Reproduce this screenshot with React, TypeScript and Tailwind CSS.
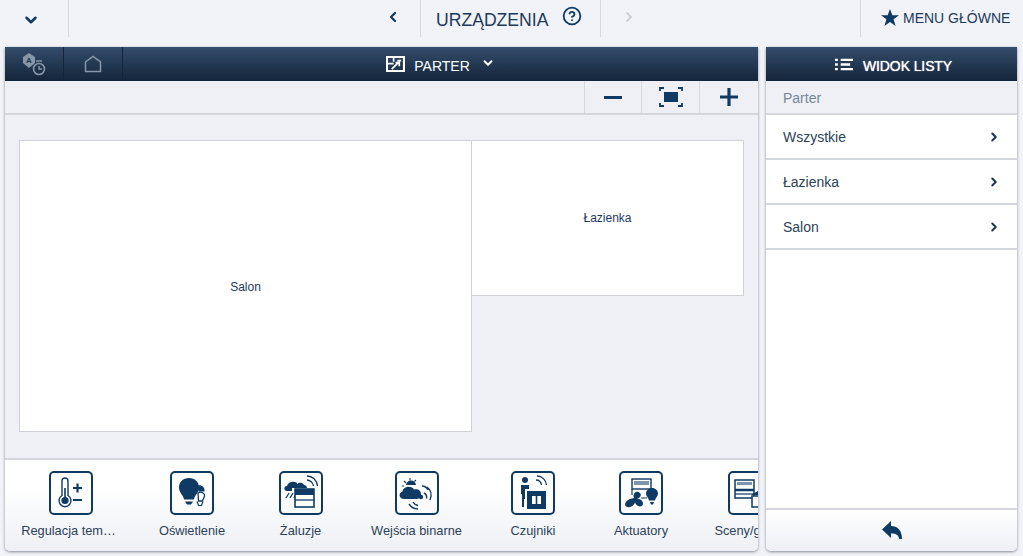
import { ChevronDown, ChevronLeft, ChevronRight, CircleHelp } from 'lucide-react'
import type { ReactNode } from 'react'

const navy = '#0f3a64'

function Thermometer() {
  return (
    <>
      <path d="M13 10a3 3 0 0 1 6 0v14.500a6 6 0 1 1-6 0z" fill="none" stroke={navy} strokeWidth="1.4" />
      <circle cx="16" cy="29.500" r="3.600" fill={navy} />
      <rect x="15.200" y="17" width="1.600" height="10" fill={navy} />
      <path d="M24 17h9M28.500 12.500v9M24 29h9" stroke={navy} strokeWidth="2.200" fill="none" />
    </>
  )
}

function Bulbs() {
  return (
    <>
      <path d="M28 22c2-1.500 6-1 6.500 2 .4 2.500-1.500 3-2 6h-4z" fill="none" stroke={navy} strokeWidth="1.300" />
      <path d="M28 14.500c3.500-1 7 1.500 6.500 6h-6z" fill={navy} />
      <path d="M19 7c6 0 10 4 10 9.500 0 5.500-4.500 7.500-5 12h-10C13.500 24 9 22 9 16.500 9 11 13 7 19 7z" fill={navy} />
      <path d="M15 30.500h8l-2 3h-4z" fill={navy} />
      <path d="M27 30.500l1.500 4h3l1.500-4" fill="none" stroke={navy} strokeWidth="1.200" />
    </>
  )
}

function Blinds() {
  return (
    <>
      <path d="M8 20c-3.500 0-3.500-5 0-5C9 10 17 9.500 18.500 13c1-1.500 5-2 6.500 1 2 0 3 1.500 3 3H13v3z" fill={navy} />
      <path d="M10 22l-3 5M14 22l-3 5M18 22l-3 5" stroke={navy} strokeWidth="1.300" />
      <rect x="16" y="18" width="19" height="18" fill="#fff" stroke={navy} strokeWidth="1.600" />
      <rect x="16" y="18" width="19" height="6" fill={navy} />
      <path d="M16 29h19" stroke={navy} strokeWidth="1.300" />
      <path d="M28 9c3 0 6 2.500 6.500 6M28 5c5.500 0 10 4 10.500 10" fill="none" stroke={navy} strokeWidth="1.300" />
    </>
  )
}

function BinaryInputs() {
  return (
    <>
      <path d="M11 15a5 5 0 0 1 10-1H11z" fill={navy} />
      <path d="M9 10l2 2M15 7v2.500M21 9l-1.500 1.500M7 15h2" stroke={navy} strokeWidth="1.100" />
      <path d="M9 28c-5 0-6-6-1.500-7.500C8 15 17 14 19 18.500c4-1 7 1 7 4.500 0 3-2 5-5 5z" fill={navy} />
      <circle cx="26" cy="26" r="2.200" fill={navy} />
      <path d="M29 22c2 1 3 3 2.500 5.500M32 16c4 3 5 8 3 13M27 15c3 0 5 2 6 4" fill="none" stroke={navy} strokeWidth="1.400" />
      <path d="M18 31c1 2 3 3 5 3.500M14 33c2 3 5 5 9 5" fill="none" stroke={navy} strokeWidth="1.400" />
    </>
  )
}

function Sensors() {
  return (
    <>
      <circle cx="14" cy="9" r="3" fill={navy} />
      <path d="M10 14h8v4h-4v10h-1v8h-2v-13h-1z" fill={navy} />
      <rect x="16" y="20" width="19" height="18" fill={navy} />
      <rect x="21" y="25" width="9" height="8" fill="#fff" />
      <path d="M25.500 25v8" stroke={navy} strokeWidth="1.600" />
      <path d="M25 9c3 0 5 2 5.500 5M26 5c5 0 9 4 9.500 9" fill="none" stroke={navy} strokeWidth="1.300" />
    </>
  )
}

function Actuators() {
  return (
    <>
      <rect x="13" y="8" width="19" height="10" fill="#fff" stroke={navy} strokeWidth="1.400" />
      <rect x="15" y="10" width="15" height="4" fill="#7f95ad" />
      <path d="M13 18v6M22 27h6" stroke={navy} strokeWidth="1.200" />
      <path d="M15 27c-2-5 3-8 6-5 2 2 0 5-3 6 3-.5 6 1.500 6 4.500 0 4-6 4-8-1-1 3-5 6-9 4-3-3 2-8 8-8.500z" fill={navy} />
      <path d="M33 17c3.500 0 6 2.500 6 5.500 0 3-2.500 4-3 7h-6c-.5-3-3-4-3-7 0-3 2.500-5.500 6-5.500z" fill={navy} />
      <path d="M31 31h4l-1 2.500h-2z" fill={navy} />
    </>
  )
}

function Scenes() {
  return (
    <>
      <rect x="7" y="9" width="19" height="18" fill="#fff" stroke={navy} strokeWidth="1.500" />
      <rect x="9" y="11" width="15" height="3" fill="#7f95ad" />
      <path d="M7 19h19" stroke={navy} strokeWidth="2.500" />
      <path d="M7 23h19" stroke={navy} strokeWidth="1.200" />
      <rect x="24" y="25" width="14" height="11" fill="#fff" stroke={navy} strokeWidth="1.500" />
      <path d="M23 24l7-4 7 4z" fill={navy} />
    </>
  )
}

const devices: { label: string; width: string; labelClass?: string; icon: ReactNode }[] = [
  { label: 'Regulacja tem…', width: 'w-[131px]', labelClass: 'mr-[4px]', icon: <Thermometer /> },
  { label: 'Oświetlenie', width: 'w-[112px]', icon: <Bulbs /> },
  { label: 'Żaluzje', width: 'w-[105px]', icon: <Blinds /> },
  { label: 'Wejścia binarne', width: 'w-[127px]', icon: <BinaryInputs /> },
  { label: 'Czujniki', width: 'w-[106px]', icon: <Sensors /> },
  { label: 'Aktuatory', width: 'w-[110px]', icon: <Actuators /> },
  { label: 'Sceny/grupy', width: 'w-[108px]', icon: <Scenes /> },
]

function DeviceButton({
  label,
  width,
  labelClass,
  icon,
}: {
  label: string
  width: string
  labelClass?: string
  icon: ReactNode
}) {
  return (
    <div className={`${width} shrink-0 flex flex-col items-center pt-[11px]`}>
      <div className="relative size-[44px] rounded-[5px] border-2 border-[#0f3a64] bg-white/40">
        <svg viewBox="0 0 44 44" className="absolute -left-[2px] -top-[2px] size-[44px]">
          {icon}
        </svg>
      </div>
      <span className={`mt-[8px] text-[12.8px] leading-[16px] text-[#2c4259] whitespace-nowrap ${labelClass ?? ''}`}>
        {label}
      </span>
    </div>
  )
}

function ListRow({ label }: { label: string }) {
  return (
    <div className="h-[45px] shrink-0 border-b-2 border-[#d3d6dc] pl-[17px] pr-[16px] flex items-center justify-between">
      <span className="pt-[1px] text-[14px] text-[#2c4259]">{label}</span>
      <ChevronRight size={14} strokeWidth={3.4} className="text-[#1c3557]" />
    </div>
  )
}

export default function App() {
  return (
    <div className="h-[556px] w-full overflow-hidden bg-[#f1f3f8] font-['Liberation_Sans',Arial,sans-serif]">
      <header className="h-[47px] flex items-start text-[#1c3a5c]">
        <div className="h-[37px] w-[69px] border-r border-[#d5d8de] flex items-center justify-center">
          <ChevronDown size={18} strokeWidth={3.4} className="text-[#0f3a64] mt-[3px] -ml-[6px]" />
        </div>
        <div className="h-[37px] w-[352px] border-r border-[#d5d8de] flex items-center justify-end pr-[19px]">
          <ChevronLeft size={16} strokeWidth={3.4} className="text-[#0f3a64] -mt-[3px]" />
        </div>
        <div className="h-[37px] w-[180px] border-r border-[#d5d8de] flex items-center pl-[15px]">
          <span className="text-[17.6px] leading-none mt-[5px]">URZĄDZENIA</span>
          <CircleHelp size={20} strokeWidth={2.2} className="ml-[14px] -mt-[5px] text-[#0f3a64]" />
        </div>
        <div className="h-[37px] w-[260px] border-r border-[#d5d8de] flex items-center pl-[20px]">
          <ChevronRight size={16} strokeWidth={3} className="text-[#cdd1d8] -mt-[3px]" />
        </div>
        <div className="h-[37px] flex-1 flex items-center pl-[20px]">
          <svg viewBox="0 0 18 17" className="w-[18px] h-[17px] -mt-[3px]">
            <path d="M9 0l2.300 6.300H18l-5.400 4 2 6.700L9 13l-5.600 4 2-6.700L0 6.300h6.700z" fill="#0f3a64" />
          </svg>
          <span className="ml-[4px] text-[14px] -mt-[1px] whitespace-nowrap">MENU GŁÓWNE</span>
        </div>
      </header>

      <main className="flex pl-[5px] gap-[8px]">
        <section className="w-[753px] h-[504px] flex flex-col rounded-b-[5px] overflow-hidden bg-[#eef0f6] shadow-[0_1px_3px_rgba(60,70,85,0.6)]">
          <div className="h-[34px] shrink-0 flex items-center bg-gradient-to-b from-[#334d6c] to-[#15253b] text-white">
            <div className="h-full w-[59px] border-r border-[#152438] flex items-center justify-center">
              <svg viewBox="0 0 24 24" className="size-[24px]" fill="none">
                <path d="M1 5l6-4 6 4v6l-6 5-6-5z" fill="#8796a8" />
                <text x="7" y="11" textAnchor="middle" fontSize="8" fontWeight="700" fill="#22364f">
                  A
                </text>
                <circle cx="17" cy="17" r="5.500" stroke="#8796a8" strokeWidth="1.600" />
                <path d="M17 14v3h3M14 9h6" stroke="#8796a8" strokeWidth="1.500" />
              </svg>
            </div>
            <div className="h-full w-[59px] border-r border-[#152438] flex items-center justify-center">
              <svg viewBox="0 0 18 18" className="size-[18px]" fill="none">
                <path d="M1.500 16.500V7L9 1.500 16.500 7v9.500z" stroke="#8796a8" strokeWidth="1.500" />
              </svg>
            </div>
            <div className="flex-1 flex items-center justify-center">
              <svg viewBox="0 0 20 17" className="w-[19px] h-[16px]" fill="none">
                <rect x="1" y="1" width="18" height="15" stroke="#fff" strokeWidth="2.200" />
                <path d="M1 8h7M8 1v5M12 5h4M6 14l7-7M10 7h4v4" stroke="#fff" strokeWidth="1.800" />
              </svg>
              <span className="ml-[9px] pt-[5px] text-[14px]">PARTER</span>
              <ChevronDown size={14} strokeWidth={3.4} className="ml-[11px] -mt-[2px]" />
            </div>
          </div>

          <div className="h-[34px] shrink-0 border-b-2 border-[#d3d6dc] flex justify-end">
            <div className="h-full w-[57px] border-l border-[#d5d8de] flex items-center justify-center">
              <span className="block w-[18px] h-[3px] bg-[#0f3a64]" />
            </div>
            <div className="h-full w-[58px] border-l border-[#d5d8de] flex items-center justify-center">
              <svg viewBox="0 0 24 20" className="w-[24px] h-[20px]" fill="none">
                <rect x="5" y="5" width="14" height="10" fill="#0f3a64" />
                <path d="M1 4V1h4M19 1h4v3M23 16v3h-4M5 19H1v-3" stroke="#0f3a64" strokeWidth="1.800" />
              </svg>
            </div>
            <div className="h-full w-[59px] border-l border-[#d5d8de] flex items-center justify-center">
              <svg viewBox="0 0 18 18" className="size-[18px]">
                <path d="M0 9h18M9 0v18" stroke="#0f3a64" strokeWidth="3.200" />
              </svg>
            </div>
          </div>

          {/* floor plan, rooms sit at their own spot on the canvas */}
          <div className="relative flex-1">
            <div className="absolute left-[14px] top-[25px] w-[453px] h-[292px] pt-[2px] bg-white border border-[#cfd2d8] flex items-center justify-center text-[12px] text-[#1c3a5c]">
              Salon
            </div>
            <div className="absolute left-[466px] top-[25px] w-[273px] h-[156px] bg-white border border-[#cfd2d8] flex items-center justify-center text-[12px] text-[#1c3a5c]">
              Łazienka
            </div>
          </div>

          <div className="h-[93px] shrink-0 border-t-2 border-[#d3d6dc] flex overflow-hidden bg-gradient-to-b from-white from-30% to-[#eef0f5]">
            {devices.map((device) => (
              <DeviceButton key={device.label} {...device} />
            ))}
          </div>
        </section>

        <aside className="w-[251px] h-[504px] flex flex-col rounded-b-[5px] overflow-hidden bg-white shadow-[0_1px_3px_rgba(60,70,85,0.6)]">
          <div className="h-[34px] shrink-0 pl-[4px] flex items-center justify-center bg-gradient-to-b from-[#334d6c] to-[#15253b] text-white">
            <svg viewBox="0 0 19 13" className="w-[18px] h-[13px]">
              <path d="M0 1.500h3M6 1.500h13M0 6.500h3M6 6.500h10M0 11.500h3M6 11.500h13" stroke="#fff" strokeWidth="2.400" />
            </svg>
            <span className="ml-[10px] pt-[5px] text-[14px] tracking-[-0.1px] [text-shadow:0_0_1px_#fff]">WIDOK LISTY</span>
          </div>
          <div className="h-[34px] shrink-0 border-b-2 border-[#d3d6dc] bg-[#eef0f6] pl-[17px] pt-[3px] flex items-center text-[14px] text-[#76869a]">
            Parter
          </div>
          <ListRow label="Wszystkie" />
          <ListRow label="Łazienka" />
          <ListRow label="Salon" />
          <div className="flex-1" />
          <div className="h-[43px] shrink-0 border-t-2 border-[#d3d6dc] bg-gradient-to-b from-white to-[#eef0f5] flex items-center justify-center">
            <svg viewBox="0 0 20 18" className="w-[20px] h-[18px] -mt-[1px] ml-[1px]">
              <path d="M0 8.500L9 0v5c6.500 0 11 4 11 13h-3c0-3.500-2.500-5.500-8-5.500V17z" fill="#0f3a64" />
            </svg>
          </div>
        </aside>
      </main>
    </div>
  )
}
